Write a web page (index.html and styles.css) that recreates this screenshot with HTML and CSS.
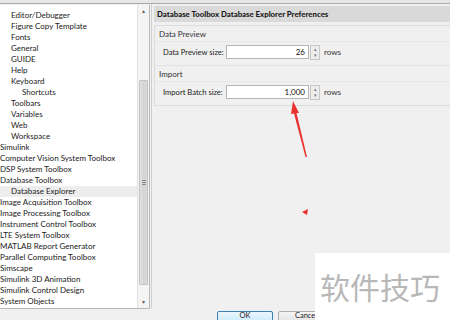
FILE: index.html
```html
<!DOCTYPE html>
<html>
<head>
<meta charset="utf-8">
<link rel="stylesheet" href="styles.css">
</head>
<body>
<div class="topstrip"></div>
<div class="main">
  <div class="tree">
    <ul class="list">
      <li class="l2">Editor/Debugger</li>
      <li class="l2">Figure Copy Template</li>
      <li class="l2">Fonts</li>
      <li class="l2">General</li>
      <li class="l2">GUIDE</li>
      <li class="l2">Help</li>
      <li class="l2">Keyboard</li>
      <li class="l3">Shortcuts</li>
      <li class="l2">Toolbars</li>
      <li class="l2">Variables</li>
      <li class="l2">Web</li>
      <li class="l2">Workspace</li>
      <li class="l1">Simulink</li>
      <li class="l1">Computer Vision System Toolbox</li>
      <li class="l1">DSP System Toolbox</li>
      <li class="l1">Database Toolbox</li>
      <li class="l2 sel">Database Explorer</li>
      <li class="l1">Image Acquisition Toolbox</li>
      <li class="l1">Image Processing Toolbox</li>
      <li class="l1">Instrument Control Toolbox</li>
      <li class="l1">LTE System Toolbox</li>
      <li class="l1">MATLAB Report Generator</li>
      <li class="l1">Parallel Computing Toolbox</li>
      <li class="l1">Simscape</li>
      <li class="l1">Simulink 3D Animation</li>
      <li class="l1">Simulink Control Design</li>
      <li class="l1">System Objects</li>
    </ul>
    <div class="vscroll">
      <div class="arrow up">&#9652;</div>
      <div class="track">
        <div class="thumb"><span class="grip"></span></div>
      </div>
      <div class="arrow down">&#9662;</div>
    </div>
  </div>
  <div class="prefs">
    <div class="header">Database Toolbox Database Explorer Preferences</div>
    <div class="group">
      <div class="section">
        <div class="sec-title">Data Preview</div>
        <div class="field">
          <span class="label">Data Preview size:</span>
          <span class="input">26</span>
          <span class="spin"><span>&#9652;</span><span>&#9662;</span></span>
          <span class="unit">rows</span>
        </div>
      </div>
      <div class="section">
        <div class="sec-title">Import</div>
        <div class="field">
          <span class="label">Import Batch size:</span>
          <span class="input">1,000</span>
          <span class="spin"><span>&#9652;</span><span>&#9662;</span></span>
          <span class="unit">rows</span>
        </div>
      </div>
    </div>
  </div>
</div>
<div class="buttons">
  <button class="btn ok">OK</button>
  <button class="btn">Cancel</button>
</div>
<svg class="annot" width="450" height="320" viewBox="0 0 450 320">
  <polygon points="293,101 299,113 296.5,113 307,157 305.5,157 294,113.5 291,114" fill="#e8322f"/>
  <polygon points="302,212 308,209 307,215" fill="#e8322f"/>
</svg>
<div class="watermark">软件技巧</div>
</body>
</html>
```
FILE: styles.css
```css
html, body {
  margin: 0;
  padding: 0;
}
body {
  width: 450px;
  height: 320px;
  overflow: hidden;
  background: #f0f0f0;
  font-family: Lato, "Noto Sans", sans-serif;
  font-size: 8px;
  color: #1a1a1a;
  position: relative;
}
.topstrip {
  height: 3px;
  background: #e6e6e6;
  border-bottom: 1px solid #a9a9a9;
}
.main {
  display: flex;
  height: 305px;
}
.tree {
  width: 150px;
  display: flex;
  background: #fff;
  border-right: 1px solid #b8b8b8;
  border-bottom: 1px solid #b8b8b8;
  margin-top: 1px;
  box-sizing: border-box;
}
.list {
  list-style: none;
  margin: 0;
  padding: 5px 0 0 0;
  flex: 1;
  overflow: hidden;
}
.list li {
  height: 11px;
  line-height: 11px;
  white-space: nowrap;
}
.l1 { padding-left: 0; }
.l2 { padding-left: 11px; }
.l3 { padding-left: 22px; }
.sel { background: #ededed; }
.vscroll {
  width: 11px;
  display: flex;
  flex-direction: column;
  background: #f4f4f4;
  border-left: 1px solid #e0e0e0;
}
.arrow {
  height: 12px;
  font-size: 6px;
  line-height: 12px;
  text-align: center;
  color: #606060;
}
.track {
  flex: 1;
  padding-top: 63px;
  padding-bottom: 11px;
  display: flex;
}
.thumb {
  flex: 1;
  margin: 0 1px;
  background: linear-gradient(90deg, #e2e2e2, #d4d4d4 50%, #dadada);
  border: 1px solid #c2c2c2;
  border-radius: 1px;
  display: flex;
  align-items: center;
  justify-content: center;
}
.grip {
  width: 4px;
  height: 5px;
  background: repeating-linear-gradient(180deg, #888 0 1px, transparent 1px 2px);
}
.prefs {
  flex: 1;
  padding: 2px 0 0 2px;
  border-left: 1px solid #d0d0d0;
  margin-left: 1px;
}
.header {
  background: #d9d9d9;
  height: 16px;
  line-height: 16px;
  font-weight: 900;
  font-size: 7.8px;
  padding-left: 3px;
  color: #1a1a1a;
}
.group {
  margin-top: 3px;
  border: 1px solid #dcdcdc;
  border-right: none;
  padding-bottom: 6px;
}
.section {
  padding: 0 0 0 4px;
}
.section + .section {
  border-top: 1px solid #e2e2e2;
  margin-top: 6px;
}
.sec-title {
  height: 14px;
  line-height: 14px;
  color: #333;
  padding-top: 1px;
  border-bottom: 1px solid #e6e6e6;
  margin-left: -4px;
  padding-left: 4px;
}
.field {
  display: flex;
  align-items: center;
  margin-top: 3px;
  padding-left: 4px;
  height: 14px;
}
.label {
  width: 63px;
  flex: none;
  white-space: nowrap;
  font-size: 7.6px;
  color: #222;
}
.input {
  width: 78px;
  height: 12px;
  line-height: 12px;
  background: #fff;
  border: 1px solid #b5b5b5;
  text-align: right;
  padding-right: 3px;
  color: #111;
}
.spin {
  display: flex;
  flex-direction: column;
  width: 8px;
  height: 13px;
  margin-left: 1px;
  border: 1px solid #c8c8c8;
  background: #ececec;
  font-size: 5px;
  line-height: 6px;
  text-align: center;
  color: #777;
}
.unit {
  margin-left: 4px;
  color: #333;
}
.buttons {
  display: flex;
  gap: 5px;
  padding-left: 217px;
  margin-top: 2px;
}
.btn {
  width: 56px;
  height: 16px;
  font-family: inherit;
  font-size: 7.5px;
  border: 1px solid #adadad;
  border-radius: 2px;
  background: linear-gradient(#f4f4f4, #dedede);
  color: #222;
  padding: 0;
  line-height: 7px;
  display: flex;
  justify-content: center;
  align-items: flex-start;
}
.ok {
  border-color: #3c7fb1;
  background: linear-gradient(#eaf6fd, #bee6fd);
}
.annot {
  position: absolute;
  left: 0;
  top: 0;
  pointer-events: none;
}
.watermark {
  position: absolute;
  left: 315px;
  top: 253px;
  width: 135px;
  height: 67px;
  background: #fff;
  color: #b8b8b8;
  font-family: "Noto Sans CJK SC", sans-serif;
  font-size: 30px;
  line-height: 67px;
  padding-left: 5px;
  box-sizing: border-box;
}
```
